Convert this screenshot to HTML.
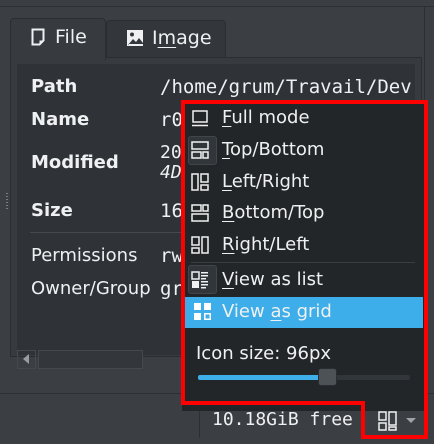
<!DOCTYPE html>
<html><head><style>
*{margin:0;padding:0;box-sizing:border-box}
body{width:434px;height:444px;background:#3b3e43;position:relative;overflow:hidden;font-family:"DejaVu Sans","Liberation Sans",sans-serif;color:#eff0f1;font-size:17px}
.a{position:absolute}
.mono{font-family:"DejaVu Sans Mono","Liberation Mono",monospace}
.lbl{position:absolute;left:31px;font-size:18px}
.val{position:absolute;left:160px;font-size:18px;white-space:nowrap}
.it{position:absolute;left:186px;width:232px;height:30px;font-size:18px;line-height:30px;padding-left:36px}
.ic{position:absolute;left:191px;width:18px;height:18px}
u{text-decoration:underline;text-underline-offset:3px}
</style></head><body>
<div class="a" style="left:0;top:0;width:434px;height:7px;border-bottom:1px solid #2c2f33"></div>
<div class="a" style="left:424px;top:7px;width:1px;height:386px;background:#2c2f33"></div>
<div class="a" style="left:10px;top:57px;width:412px;height:300px;border:1px solid #2a2d31;background:#373b40"></div>
<div class="a" style="left:10px;top:18px;width:96px;height:42px;background:#373b40;border:1px solid #2a2d31;border-bottom:none;border-radius:4px 4px 0 0"></div>
<div class="a" style="left:106px;top:20px;width:120px;height:37px;background:#33373b;border:1px solid #2a2d31;border-bottom:none;border-radius:4px 4px 0 0"></div>
<svg class="a" style="left:31px;top:28px" width="14" height="18"><path d="M1.5 1.5h11v11l-4 4h-7z" fill="none" stroke="#eff0f1" stroke-width="2"/><path d="M8.5 16.5v-4h4" fill="#eff0f1"/></svg>
<div class="a" style="left:55px;top:26px;font-size:19px">File</div>
<svg class="a" style="left:126px;top:29px" width="18" height="18"><rect x="1" y="1" width="16" height="16" fill="#eff0f1"/><path d="M2 16l5-6 3 3 3-4 4 5v1H2z" fill="#33373b"/><circle cx="6" cy="5.5" r="2" fill="#33373b"/></svg>
<div class="a" style="left:152px;top:27px;font-size:19px">I<u>m</u>age</div>
<div class="a" style="left:17px;top:64px;width:398px;height:291px;background:#2f3338;overflow:hidden">
<div class="lbl" style="left:14px;top:12px;font-weight:bold">Path</div><div class="val mono" style="left:143px;top:12px;font-size:19px">/home/grum/Travail/Dev</div>
</div>
<div class="lbl" style="top:109px;font-weight:bold">Name</div><div class="val mono" style="top:109px;font-size:19px">r0</div>
<div class="lbl" style="top:152px;font-weight:bold">Modified</div><div class="val mono" style="top:142px">20</div><div class="val mono" style="top:162px;font-style:italic">4D</div>
<div class="lbl" style="top:200px;font-weight:bold">Size</div><div class="val mono" style="top:200px;font-size:19px">16</div>
<div class="a" style="left:30px;top:232px;width:160px;height:1px;background:#45494e"></div>
<div class="lbl" style="top:245px">Permissions</div><div class="val mono" style="top:245px;font-size:19px">rw</div>
<div class="lbl" style="top:278px">Owner/Group</div><div class="val mono" style="top:278px;font-size:19px">gr</div>
<div class="a" style="left:17px;top:350px;width:19px;height:19px;border:1px solid #45494e"></div>
<div class="a" style="left:23px;top:354px;width:0;height:0;border:5px solid transparent;border-right:6px solid #9a9da0;border-left:none"></div>
<div class="a" style="left:38px;top:350px;width:105px;height:19px;border:1px solid #45494e;background:#33373b"></div>
<div class="a" style="left:6px;top:193px;width:2px;height:16px;background:repeating-linear-gradient(#7a7d80 0 1px,transparent 1px 3px)"></div>
<div class="a" style="left:0;top:393px;width:434px;height:1px;background:#2c2f33"></div>
<div class="a" style="left:199px;top:398px;width:1px;height:40px;background:#2c2f33"></div>
<div class="a mono" style="left:212px;top:409px;font-size:18px">10.18GiB free</div>
<svg class="a" style="left:378px;top:411px" width="20" height="20"><g fill="none" stroke="#eff0f1" stroke-width="1.5"><rect x="1" y="1" width="7" height="8"/><rect x="11" y="1" width="7" height="13"/><rect x="1" y="12" width="7" height="7"/><rect x="11" y="16" width="7" height="3"/></g></svg>
<div class="a" style="left:406px;top:418px;border:5px solid transparent;border-top:5px solid #a0a3a6;border-bottom:none"></div>
<div class="a" style="left:182px;top:101px;width:244px;height:310px;background:#232629"></div>
<svg class="a" style="left:0;top:0" width="434" height="444"><path d="M183 102H426V437H363V403H183Z" fill="none" stroke="#ff0000" stroke-width="4"/></svg>
<div class="it" style="top:103px"><u>F</u>ull mode</div>
<svg class="ic" style="top:109px" width="18" height="18"><g fill="none" stroke="#eff0f1" stroke-width="1.5"><rect x="2" y="2" width="14" height="11"/><path d="M1 16.5h16"/></g></svg>
<div class="a" style="left:188px;top:136px;width:29px;height:29px;background:#31363b;border:1px solid #41464b;border-radius:3px"></div>
<div class="it" style="top:135px"><u>T</u>op/Bottom</div>
<svg class="ic" style="top:141px" width="18" height="18"><g fill="none" stroke="#eff0f1" stroke-width="1.5"><rect x="1" y="1" width="16" height="7"/><rect x="1" y="11" width="9" height="6"/><rect x="12" y="11" width="5" height="6"/></g></svg>
<div class="it" style="top:167px"><u>L</u>eft/Right</div>
<svg class="ic" style="top:173px" width="18" height="18"><g fill="none" stroke="#eff0f1" stroke-width="1.5"><rect x="1" y="1" width="6" height="16"/><rect x="10" y="1" width="7" height="8"/><rect x="10" y="12" width="7" height="5"/></g></svg>
<div class="it" style="top:198px"><u>B</u>ottom/Top</div>
<svg class="ic" style="top:204px" width="18" height="18"><g fill="none" stroke="#eff0f1" stroke-width="1.5"><rect x="1" y="1" width="9" height="6"/><rect x="12" y="1" width="5" height="6"/><rect x="1" y="10" width="16" height="7"/></g></svg>
<div class="it" style="top:230px"><u>R</u>ight/Left</div>
<svg class="ic" style="top:236px" width="18" height="18"><g fill="none" stroke="#eff0f1" stroke-width="1.5"><rect x="1" y="1" width="7" height="8"/><rect x="1" y="12" width="7" height="5"/><rect x="11" y="1" width="6" height="16"/></g></svg>
<div class="a" style="left:191px;top:262px;width:224px;height:1px;background:#3a3e42"></div>
<div class="a" style="left:188px;top:265px;width:29px;height:29px;background:#31363b;border:1px solid #41464b;border-radius:3px"></div>
<div class="it" style="top:265px"><u>V</u>iew as list</div>
<svg class="ic" style="top:271px" width="18" height="18"><g fill="#eff0f1"><rect x="1" y="1" width="7" height="7" fill="none" stroke="#eff0f1" stroke-width="1.5"/><rect x="1" y="10" width="7" height="7"/><rect x="10" y="1" width="7" height="1.5"/><rect x="10" y="4" width="7" height="1.5"/><rect x="10" y="7" width="5" height="1.5"/><rect x="10" y="10" width="7" height="1.5"/><rect x="10" y="13" width="7" height="1.5"/><rect x="10" y="16" width="5" height="1.5"/></g></svg>
<div class="it" style="top:297px;height:31px;background:#3daee9;left:185px;width:238px;padding-left:37px">View <u>a</u>s grid</div>
<svg class="ic" style="top:303px;left:194px" width="18" height="18"><g fill="#fff"><rect x="0" y="0" width="7" height="7"/><rect x="10" y="0" width="7" height="7"/><rect x="0" y="10" width="7" height="7"/></g><rect x="10.75" y="10.75" width="5.5" height="5.5" fill="none" stroke="#fff" stroke-width="1.5"/></svg>
<div class="a" style="left:196px;top:343px;font-size:18px">Icon size: 96px</div>
<div class="a" style="left:198px;top:375px;width:212px;height:5px;background:#31363b;border-radius:2px"></div>
<div class="a" style="left:198px;top:375px;width:122px;height:5px;background:#3daee9;border-radius:2px"></div>
<div class="a" style="left:318px;top:368px;width:19px;height:18px;background:#4d5257;border:1px solid #2a2d31;border-radius:3px"></div>
</body></html>
